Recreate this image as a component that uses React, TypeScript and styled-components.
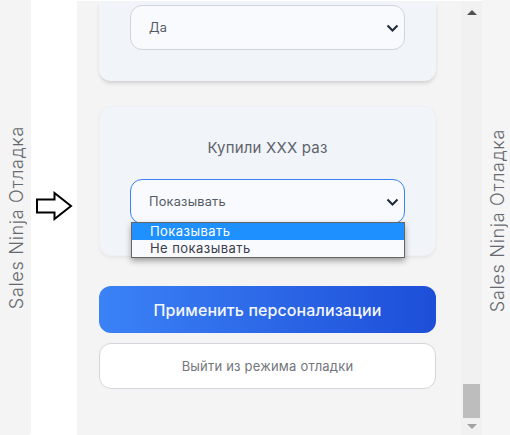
import React from "react";
import styled, { createGlobalStyle } from "styled-components";

const GlobalStyle = createGlobalStyle`
  html, body {
    margin: 0;
    padding: 0;
    background: #ffffff;
    overflow: hidden;
  }
  * {
    box-sizing: border-box;
  }
`;

const Page = styled.div`
  display: flex;
  width: 510px;
  height: 435px;
  font-family: "Inter", "Liberation Sans", sans-serif;
  color: #555b66;
`;

const SideTab = styled.div<{ $side: "left" | "right" }>`
  width: ${(p) => (p.$side === "left" ? "31px" : "28px")};
  height: 435px;
  flex: none;
  display: flex;
  align-items: center;
  justify-content: center;
  background: ${(p) => (p.$side === "left" ? "#f4f4f4" : "#f5f5f5")};
  border-bottom-right-radius: ${(p) => (p.$side === "left" ? "4px" : "0")};
  padding-top: ${(p) => (p.$side === "left" ? "0" : "6px")};
  padding-left: 2px;
`;

const SideLabel = styled.span`
  writing-mode: vertical-rl;
  transform: rotate(180deg);
  font-size: 18px;
  font-weight: 300;
  letter-spacing: 0.7px;
  color: #66696f;
  white-space: nowrap;
`;

const ArrowGap = styled.div`
  width: 46px;
  flex: none;
  display: flex;
  justify-content: center;
  padding: 191px 0 0 2px;
`;

const Panel = styled.main`
  width: 384px;
  height: 434px;
  margin-top: 1px;
  flex: none;
  display: flex;
  flex-direction: column;
  padding: 0 25px 0 22px;
  background: #f4f4f4;
`;

const Card = styled.section<{ $clipped?: boolean }>`
  position: relative;
  display: flex;
  flex-direction: column;
  padding: ${(p) => (p.$clipped ? "4px 31px 31px" : "0 30px")};
  height: ${(p) => (p.$clipped ? "80px" : "150px")};
  margin-bottom: ${(p) => (p.$clipped ? "25px" : "30px")};
  background: #f1f4f9;
  border-radius: ${(p) => (p.$clipped ? "0 0 12px 12px" : "12px")};
  border: ${(p) => (p.$clipped ? "0" : "1px solid #eef0f3")};
  box-shadow: ${(p) =>
    p.$clipped
      ? "0 3px 4px -1px rgba(0, 0, 0, 0.16)"
      : "0 2px 4px -1px rgba(0, 0, 0, 0.08)"};
`;

const CardTitle = styled.h3`
  margin: 31px 0 21px;
  font-size: 15px;
  line-height: 20px;
  font-weight: 400;
  text-align: center;
  letter-spacing: 0.2px;
  color: #5f636c;
`;

const SelectBox = styled.div<{ $open?: boolean }>`
  display: flex;
  align-items: center;
  justify-content: space-between;
  height: 45px;
  padding: 0 5px 0 18px;
  background: #f8fafd;
  border: 1px solid ${(p) => (p.$open ? "#3b82f6" : "#cfd4de")};
  border-radius: 12px;
  font-size: 12.8px;
  letter-spacing: 0.2px;
  color: #555b66;
`;

const DropdownList = styled.ul`
  position: absolute;
  left: 31px;
  top: 115px;
  width: 274px;
  height: 36px;
  margin: 0;
  padding: 0;
  list-style: none;
  background: #f8fafd;
  border: 1px solid #666666;
  box-shadow: 0 3px 6px rgba(0, 0, 0, 0.35);
`;

const DropdownItem = styled.li<{ $active?: boolean }>`
  height: 17px;
  padding-left: 18px;
  font-size: 13px;
  line-height: 17px;
  letter-spacing: 0.45px;
  color: ${(p) => (p.$active ? "#ffffff" : "#3c3c4a")};
  background: ${(p) => (p.$active ? "#1e90ff" : "transparent")};
`;

const PrimaryButton = styled.button`
  display: block;
  width: 337px;
  height: 47px;
  flex: none;
  border: 0;
  border-radius: 12px;
  background: linear-gradient(90deg, #3b82f6, #1d4ed8);
  color: #f4f7ff;
  font-family: inherit;
  font-size: 16px;
  font-weight: 500;
  letter-spacing: 0.1px;
`;

const GhostButton = styled.button`
  display: block;
  width: 337px;
  height: 46px;
  margin-top: 10px;
  flex: none;
  background: #ffffff;
  border: 1px solid #d3d5db;
  border-radius: 12px;
  color: #73767d;
  font-family: inherit;
  font-size: 13px;
  letter-spacing: 0.2px;
`;

const Scrollbar = styled.div`
  width: 21px;
  height: 434px;
  margin-top: 1px;
  flex: none;
  display: flex;
  flex-direction: column;
  align-items: center;
  background: #f1f1f1;
`;

const ScrollArrow = styled.svg<{ $dim?: boolean }>`
  display: block;
  flex: none;
  fill: ${(p) => (p.$dim ? "#a3a3a3" : "#505050")};
`;

const ScrollTrack = styled.div`
  flex: 1;
  width: 17px;
  display: flex;
  align-items: flex-end;
  padding-bottom: 6px;
`;

const ScrollThumb = styled.div`
  width: 17px;
  height: 34px;
  background: #bdbdbd;
`;

const Chevron = () => (
  <svg width="13" height="14" viewBox="0 0 13 14" fill="none">
    <path d="M1.5 4.5 6.5 9.5 11.5 4.5" stroke="#1f2937" strokeWidth="2" />
  </svg>
);

const App = () => {
  return (
    <Page>
      <GlobalStyle />
      <SideTab $side="left">
        <SideLabel>Sales Ninja Отладка</SideLabel>
      </SideTab>
      <ArrowGap>
        <svg width="38" height="30" viewBox="0 0 38 30">
          <path
            d="M1 8.5H18.5V2L35 15 18.5 28V21.5H1Z"
            fill="#ffffff"
            stroke="#000000"
            strokeWidth="2"
          />
        </svg>
      </ArrowGap>
      <Panel>
        <Card $clipped>
          <SelectBox>
            Да
            <Chevron />
          </SelectBox>
        </Card>
        <Card>
          <CardTitle>Купили ХХХ раз</CardTitle>
          <SelectBox $open>
            Показывать
            <Chevron />
          </SelectBox>
          <DropdownList>
            <DropdownItem $active>Показывать</DropdownItem>
            <DropdownItem>Не показывать</DropdownItem>
          </DropdownList>
        </Card>
        <PrimaryButton>Применить персонализации</PrimaryButton>
        <GhostButton>Выйти из режима отладки</GhostButton>
      </Panel>
      <Scrollbar>
        <ScrollArrow width="10" height="5" viewBox="0 0 10 5" style={{ marginTop: 9 }}>
          <path d="M5 0 10 5H0Z" />
        </ScrollArrow>
        <ScrollTrack>
          <ScrollThumb />
        </ScrollTrack>
        <ScrollArrow $dim width="10" height="5" viewBox="0 0 10 5" style={{ marginBottom: 6 }}>
          <path d="M0 0H10L5 5Z" />
        </ScrollArrow>
      </Scrollbar>
      <SideTab $side="right">
        <SideLabel>Sales Ninja Отладка</SideLabel>
      </SideTab>
    </Page>
  );
};

export default App;
